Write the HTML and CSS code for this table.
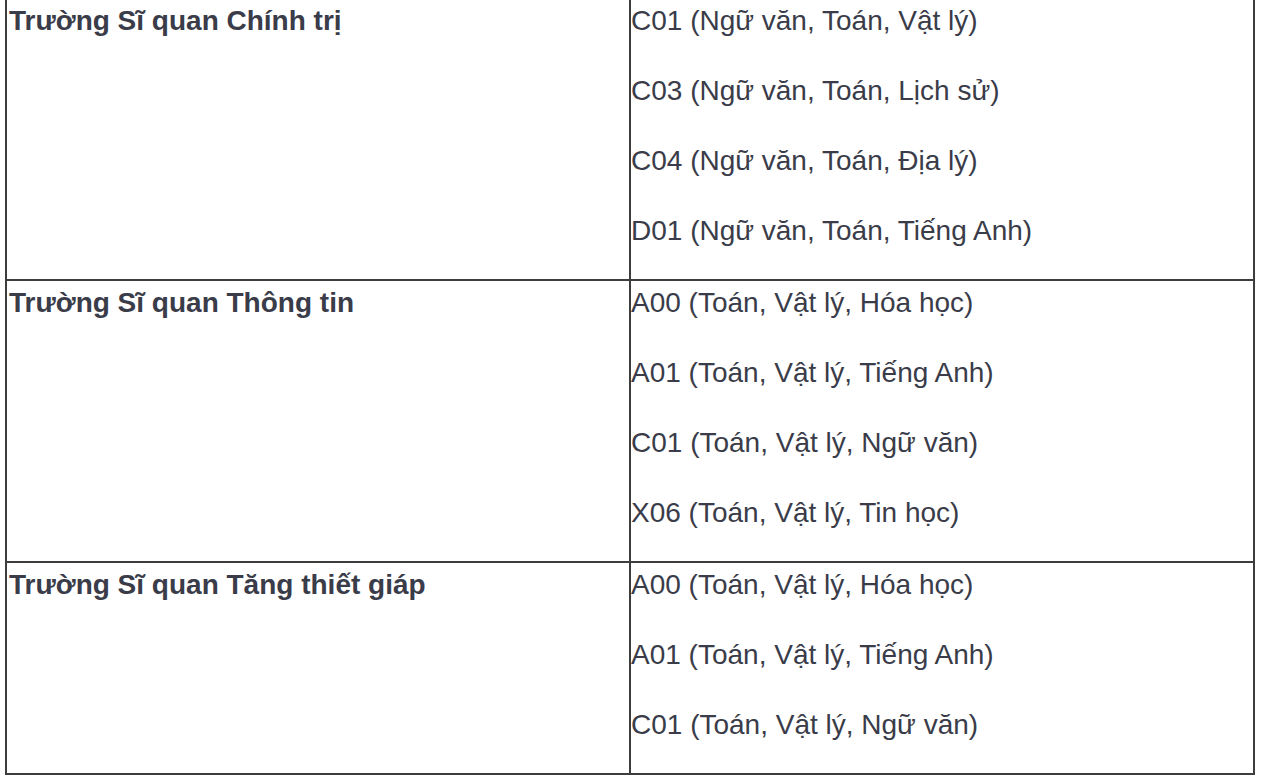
FILE: index.html
```html
<!DOCTYPE html>
<html lang="vi">
<head>
<meta charset="utf-8">
<title>Tổ hợp xét tuyển</title>
<link rel="stylesheet" href="styles.css">
</head>
<body>
<table class="grid">
  <tbody>
    <tr>
      <td class="school"><p class="name">Trường Sĩ quan Chính trị</p></td>
      <td class="combos">
        <p>C01 (Ngữ văn, Toán, Vật lý)</p>
        <p>C03 (Ngữ văn, Toán, Lịch sử)</p>
        <p>C04 (Ngữ văn, Toán, Địa lý)</p>
        <p>D01 (Ngữ văn, Toán, Tiếng Anh)</p>
      </td>
    </tr>
    <tr>
      <td class="school"><p class="name">Trường Sĩ quan Thông tin</p></td>
      <td class="combos">
        <p>A00 (Toán, Vật lý, Hóa học)</p>
        <p>A01 (Toán, Vật lý, Tiếng Anh)</p>
        <p>C01 (Toán, Vật lý, Ngữ văn)</p>
        <p>X06 (Toán, Vật lý, Tin học)</p>
      </td>
    </tr>
    <tr>
      <td class="school"><p class="name">Trường Sĩ quan Tăng thiết giáp</p></td>
      <td class="combos">
        <p>A00 (Toán, Vật lý, Hóa học)</p>
        <p>A01 (Toán, Vật lý, Tiếng Anh)</p>
        <p>C01 (Toán, Vật lý, Ngữ văn)</p>
      </td>
    </tr>
  </tbody>
</table>
</body>
</html>
```

FILE: styles.css
```css
html, body {
  margin: 0;
  padding: 0;
  background: #ffffff;
}

body {
  font-family: "Liberation Sans", Arial, "Helvetica", sans-serif;
  font-size: 28px;
  color: #3a3c49;
  overflow: hidden;
}

.grid {
  border-collapse: separate;
  border-spacing: 0;
  table-layout: fixed;
  width: 1250px;
  margin: -3px 0 0 5px;
  border-top: 2px solid #3d3d3d;
  border-left: 2px solid #3d3d3d;
}

.grid td {
  box-sizing: border-box;
  width: 624px;
  vertical-align: top;
  border-right: 2px solid #3d3d3d;
  border-bottom: 2px solid #3d3d3d;
  padding: 0;
}

.school {
  padding-left: 2px !important;
}

.grid p {
  margin: 0 0 26px 0;
  line-height: 44px;
  white-space: nowrap;
}

.name {
  font-weight: bold;
}
```
